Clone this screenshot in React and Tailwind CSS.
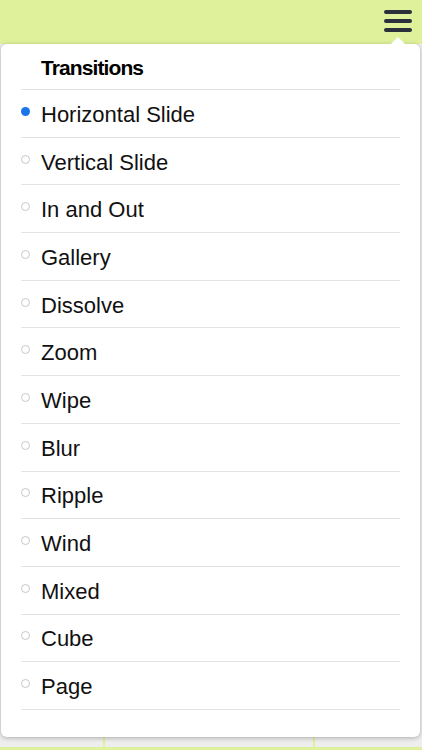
import React from "react";

const items = [
  "Horizontal Slide",
  "Vertical Slide",
  "In and Out",
  "Gallery",
  "Dissolve",
  "Zoom",
  "Wipe",
  "Blur",
  "Ripple",
  "Wind",
  "Mixed",
  "Cube",
  "Page",
];

export default function App() {
  const selected = 0;

  return (
    <div
      className="relative w-[422px] h-[750px] overflow-hidden bg-[#dff19b] flex flex-col"
      style={{ fontFamily: '"Liberation Sans", Arial, sans-serif' }}
    >
      {/* Top bar */}
      <header className="h-[44px] shrink-0 flex justify-end items-start pt-[10px] pr-[10px]">
        <button className="flex flex-col gap-[5px] w-[28px]">
          <span className="block h-[4px] w-full rounded-full bg-[#2b313a]" />
          <span className="block h-[4px] w-full rounded-full bg-[#2b313a]" />
          <span className="block h-[4px] w-full rounded-full bg-[#2b313a]" />
        </button>
      </header>

      {/* Content grid behind the menu */}
      <div className="flex-1 flex border-b-[3px] border-[#dff19b]">
        <div className="w-[105px] bg-[#eeeeee] border-r-2 border-[#dff19b]" />
        <div className="w-[210px] bg-[#eeeeee] border-r-2 border-[#dff19b]" />
        <div className="flex-1 bg-[#eeeeee]" />
      </div>

      {/* Dropdown menu */}
      <div className="absolute left-[1px] top-[44px] w-[419px] h-[693px] bg-white rounded-[6px] shadow-[0_1px_5px_rgba(0,0,0,0.28)]">
        <div className="absolute -top-[5px] right-[17px] w-[10px] h-[10px] bg-white rotate-45" />
        <div className="relative px-[20px]">
          <div className="h-[46px] flex items-center pl-[20px] pt-[1px] border-b border-[#e3e3e3]">
            <h3 className="text-[21px] font-bold text-black tracking-[-0.9px] leading-none">Transitions</h3>
          </div>
          <ul>
            {items.map((label, i) => (
              <li
                key={label}
                className="h-[47.7px] flex items-center border-b border-[#e3e3e3] pt-[3px]"
              >
                <span className="w-[20px] flex items-center -mt-[7px]">
                  {i === selected ? (
                    <span className="block w-[9px] h-[9px] rounded-full bg-[#1b74ea]" />
                  ) : (
                    <span className="block w-[9px] h-[9px] rounded-full border-[1.5px] border-[#c7c7c7]" />
                  )}
                </span>
                <span className="text-[22px] text-[#111111] leading-none">{label}</span>
              </li>
            ))}
          </ul>
        </div>
      </div>
    </div>
  );
}
